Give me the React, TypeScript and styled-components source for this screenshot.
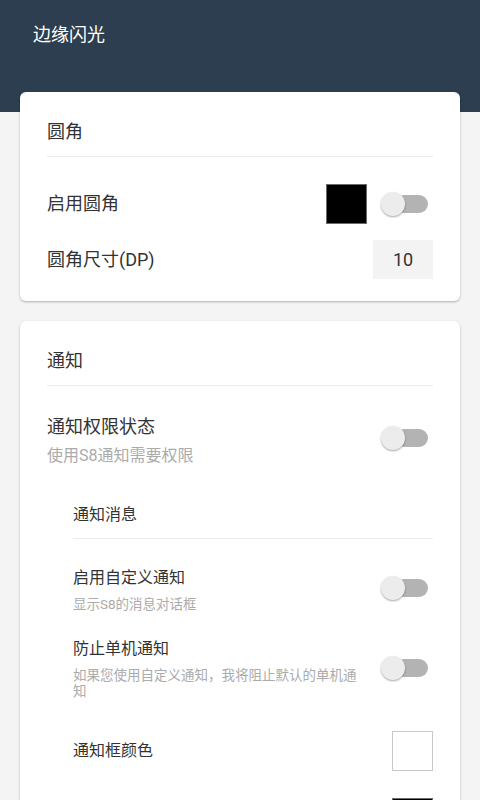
import React from "react";
import styled, { createGlobalStyle } from "styled-components";

const Global = createGlobalStyle`
  html, body {
    margin: 0;
    padding: 0;
    background: #f4f4f4;
    font-family: Roboto, "Noto Sans CJK SC", "Noto Sans", sans-serif;
    -webkit-font-smoothing: antialiased;
  }
  * { box-sizing: border-box; }
`;

const Page = styled.div`
  width: 480px;
  height: 800px;
  background: #f4f4f4;
  overflow: hidden;
`;

const Header = styled.header`
  height: 112px;
  background: #2c3e50;
  padding: 23px 0 0 33px;
`;

const HeaderTitle = styled.h1`
  margin: 0;
  font-size: 18px;
  line-height: 24px;
  font-weight: 400;
  color: #ffffff;
`;

const Content = styled.main`
  margin-top: -20px;
  padding: 0 20px 20px;
  display: flex;
  flex-direction: column;
  gap: 20px;
`;

const Card = styled.section`
  background: #ffffff;
  border-radius: 6px;
  box-shadow: 0 1px 3px rgba(0, 0, 0, 0.22), 0 1px 1px rgba(0, 0, 0, 0.08);
  padding: 0 27px;
`;

const SectionHeader = styled.div<{ $indent?: number; $top?: number; $size?: number }>`
  margin-left: ${(p) => p.$indent ?? 0}px;
  margin-top: ${(p) => p.$top ?? 0}px;
  padding: ${(p) => (p.$top ? "0 0 11px" : "28px 0 12px")};
  border-bottom: 1px solid #ececec;
  font-size: ${(p) => p.$size ?? 18}px;
  line-height: 24px;
  color: #333333;
`;

const List = styled.div<{ $pb?: number }>`
  display: flex;
  flex-direction: column;
  padding-bottom: ${(p) => p.$pb ?? 0}px;
`;

const Row = styled.div<{ $top: number; $indent?: number }>`
  display: flex;
  align-items: center;
  gap: 18px;
  margin-top: ${(p) => p.$top}px;
  margin-left: ${(p) => p.$indent ?? 0}px;
`;

const TextCol = styled.div`
  flex: 1;
  min-width: 0;
  display: flex;
  flex-direction: column;
`;

const Label = styled.div<{ $small?: boolean }>`
  font-size: ${(p) => (p.$small ? 16 : 18)}px;
  line-height: ${(p) => (p.$small ? 22 : 24)}px;
  color: #333333;
`;

const Sub = styled.div<{ $small?: boolean }>`
  font-size: ${(p) => (p.$small ? 13.5 : 16)}px;
  line-height: ${(p) => (p.$small ? 16 : 20)}px;
  margin-top: 7px;
  color: #ababab;
`;

const Controls = styled.div`
  display: flex;
  align-items: center;
  gap: 14px;
`;

const Swatch = styled.div<{ $color: string; $border: string }>`
  width: 41px;
  height: 40px;
  background: ${(p) => p.$color};
  border: 1px solid ${(p) => p.$border};
`;

const SwitchWrap = styled.div<{ $lift?: number }>`
  position: relative;
  width: 47px;
  height: 24px;
  margin-right: 5px;
  margin-bottom: ${(p) => p.$lift ?? 0}px;
  display: flex;
  align-items: center;
  justify-content: flex-end;
  flex-shrink: 0;
`;

const Track = styled.div`
  width: 33px;
  height: 18px;
  border-radius: 9px;
  background: #b3b3b3;
`;

const Thumb = styled.div`
  position: absolute;
  left: 0;
  top: 0;
  width: 24px;
  height: 24px;
  border-radius: 50%;
  background: #ececec;
  box-shadow: 0 1px 2px rgba(0, 0, 0, 0.35);
`;

const NumberBox = styled.div`
  width: 60px;
  height: 39px;
  background: #f3f3f3;
  display: flex;
  align-items: center;
  justify-content: center;
  font-size: 18px;
  color: #333333;
`;

const Switch = ({ lift }: { lift?: number }) => (
  <SwitchWrap $lift={lift}>
    <Track />
    <Thumb />
  </SwitchWrap>
);

export default function App() {
  return (
    <Page>
      <Global />
      <Header>
        <HeaderTitle>边缘闪光</HeaderTitle>
      </Header>
      <Content>
        <Card>
          <SectionHeader>圆角</SectionHeader>
          <List $pb={22}>
            <Row $top={27}>
              <TextCol>
                <Label>启用圆角</Label>
              </TextCol>
              <Controls>
                <Swatch $color="#000000" $border="#6a6a6a" />
                <Switch />
              </Controls>
            </Row>
            <Row $top={16}>
              <TextCol>
                <Label>圆角尺寸(DP)</Label>
              </TextCol>
              <NumberBox>10</NumberBox>
            </Row>
          </List>
        </Card>

        <Card>
          <SectionHeader>通知</SectionHeader>
          <List $pb={20}>
            <Row $top={29}>
              <TextCol>
                <Label>通知权限状态</Label>
                <Sub>使用S8通知需要权限</Sub>
              </TextCol>
              <Switch lift={5} />
            </Row>
            <SectionHeader $indent={26} $top={37} $size={16}>
              通知消息
            </SectionHeader>
            <Row $top={28} $indent={26}>
              <TextCol>
                <Label $small>启用自定义通知</Label>
                <Sub $small>显示S8的消息对话框</Sub>
              </TextCol>
              <Switch lift={3} />
            </Row>
            <Row $top={26} $indent={26}>
              <TextCol>
                <Label $small>防止单机通知</Label>
                <Sub $small>如果您使用自定义通知，我将阻止默认的单机通知</Sub>
              </TextCol>
              <Switch lift={2} />
            </Row>
            <Row $top={32} $indent={26}>
              <TextCol>
                <Label $small>通知框颜色</Label>
              </TextCol>
              <Swatch $color="#ffffff" $border="#c8c8c8" />
            </Row>
            <Row $top={27} $indent={26}>
              <TextCol />
              <Swatch $color="#000000" $border="#6a6a6a" />
            </Row>
          </List>
        </Card>
      </Content>
    </Page>
  );
}
